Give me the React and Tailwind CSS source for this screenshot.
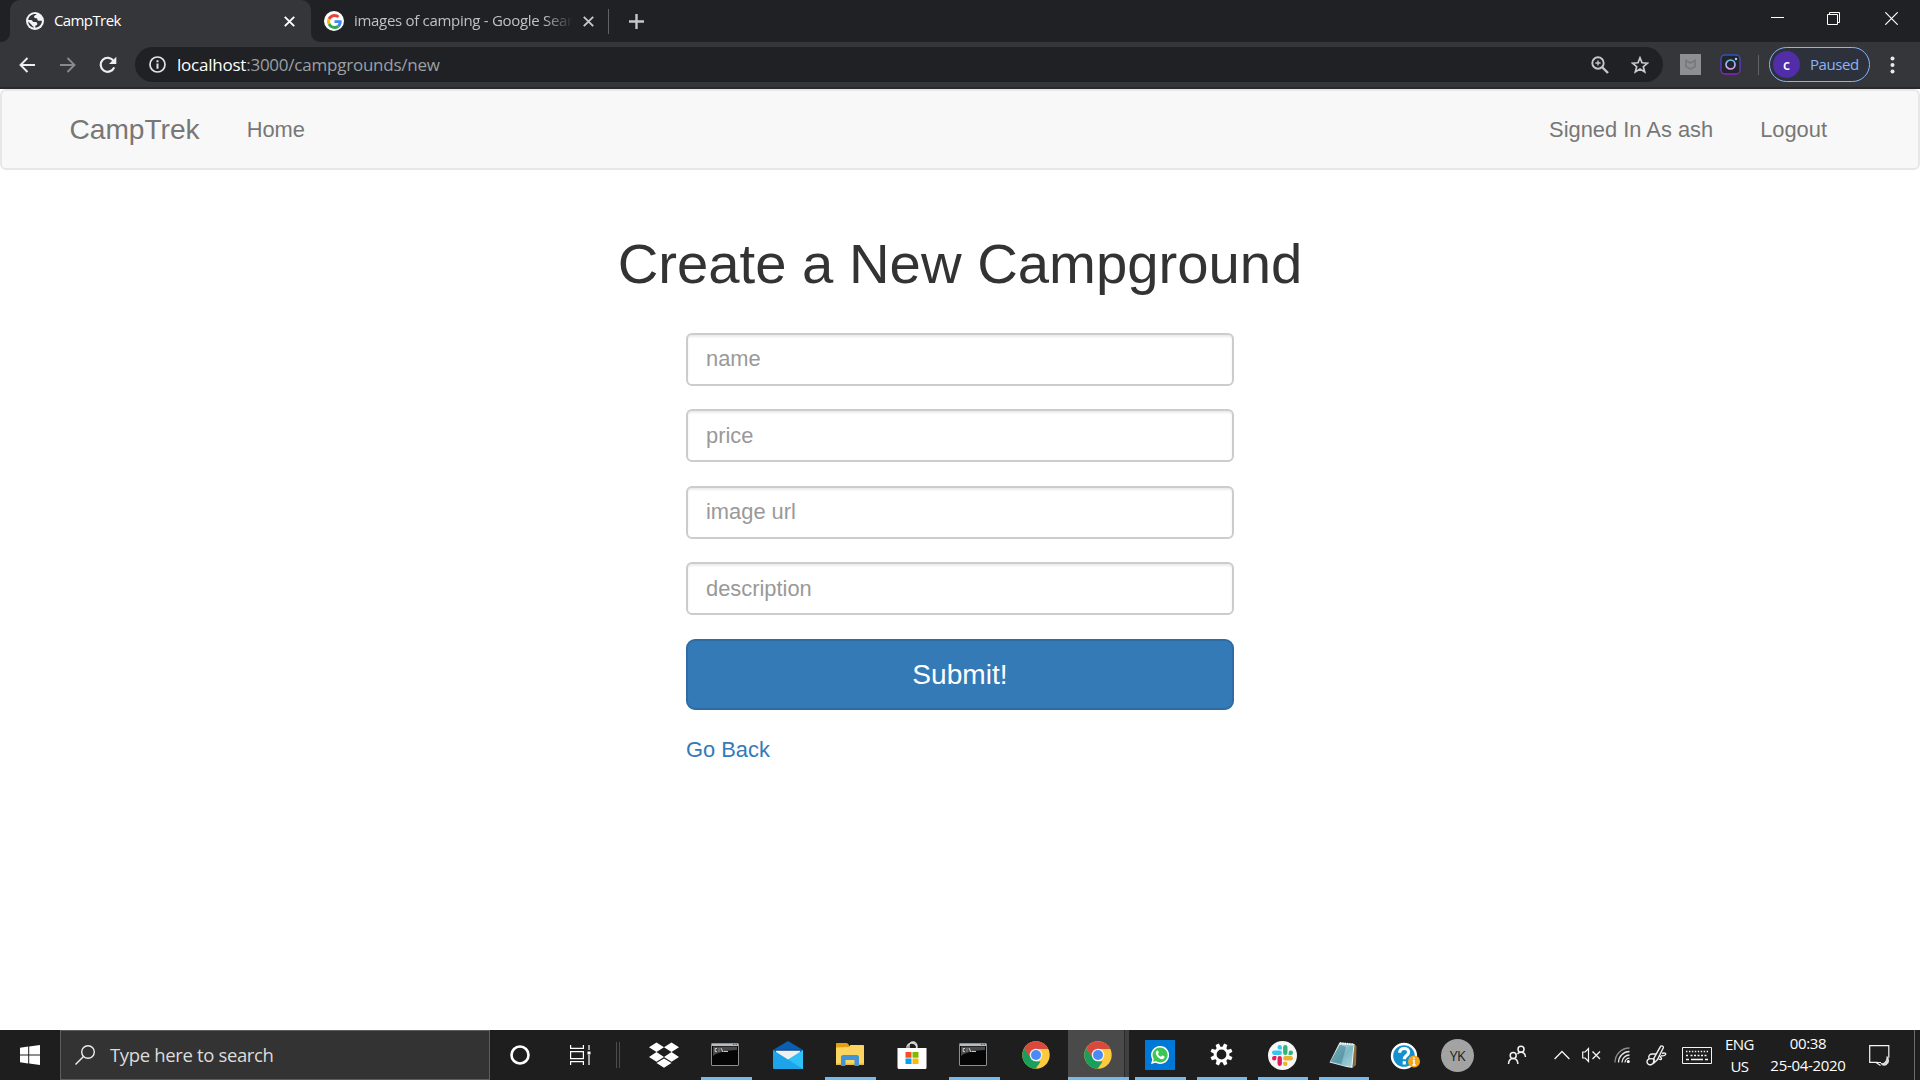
import React from "react";

function Glyph({ className = "", box = "0 0 24 24", children }) {
  return (
    <svg className={`shrink-0 ${className}`} viewBox={box} fill="none">
      {children}
    </svg>
  );
}

/* ---------- browser icons ---------- */

const Globe = () => (
  <Glyph className="size-[18px]" box="0 0 18 18">
    <circle cx="9" cy="9" r="9" fill="#f1f3f4" />
    <path fill="#35363a" d="M10.700 2.200C9.900 3.100 8.200 3.100 8 4.600c-.1 1.200.7 1.600 1.900 1.600.9 0 1.500.5 1.500 1.300 0 .9.600 1.300 1.600 1.300h2.900c0 3.700-2.900 6.900-6.600 6.900v-2.200c1.500 0 2-.8 2-1.800 0-1.300-.9-1.800-2.200-1.800H7c-.3-1.500-1.300-2-2.500-2H2.200C2.600 4.300 6.600 1.300 10.700 2.200Z" />
    <path fill="#35363a" d="M2.200 9.600 6 13.200c.3 1 1 1.200 1.600 1.400v1.100C4.500 15.200 2.300 12.700 2.200 9.600Z" />
  </Glyph>
);

const GoogleG = () => (
  <span className="flex size-5 shrink-0 items-center justify-center rounded-full bg-white">
    <Glyph className="size-[15px]" box="0 0 48 48">
      <path fill="#ea4335" d="M24 9.500c3.540 0 6.710 1.220 9.210 3.600l6.850-6.850C35.900 2.380 30.470 0 24 0 14.620 0 6.510 5.380 2.560 13.220l7.980 6.190C12.430 13.720 17.740 9.500 24 9.500z" />
      <path fill="#4285f4" d="M46.980 24.550c0-1.570-.15-3.090-.38-4.550H24v9.020h12.940c-.58 2.960-2.260 5.480-4.780 7.180l7.730 6c4.510-4.180 7.090-10.360 7.090-17.650z" />
      <path fill="#fbbc05" d="M10.530 28.590c-.48-1.450-.76-2.990-.76-4.590s.27-3.140.76-4.590l-7.980-6.190C.92 16.460 0 20.120 0 24c0 3.880.92 7.540 2.560 10.780l7.970-6.190z" />
      <path fill="#34a853" d="M24 48c6.480 0 11.930-2.130 15.890-5.810l-7.730-6c-2.150 1.450-4.920 2.300-8.160 2.300-6.260 0-11.570-4.220-13.470-9.910l-7.980 6.190C6.510 42.620 14.620 48 24 48z" />
    </Glyph>
  </span>
);

const CloseX = ({ className }) => (
  <Glyph className={`size-[11px] ${className}`} box="0 0 11 11">
    <path d="m.8.8 9.400 9.400M10.200.8.8 10.200" stroke="currentColor" strokeWidth="1.900" />
  </Glyph>
);

/* ---------- taskbar icons ---------- */

const Dropbox = () => (
  <Glyph className="size-[30px]" box="0 0 30 30">
    <path fill="#fff" d="m7.500 2.500 7.500 4.800-7.500 4.800L0 7.300ZM22.500 2.500 30 7.300l-7.500 4.800L15 7.300ZM7.500 12.100l7.500 4.800-7.500 4.800L0 16.900ZM22.500 12.100l7.500 4.800-7.500 4.800-7.500-4.800ZM15 18.400l7.500 4.700-7.500 4.700-7.500-4.700Z" />
  </Glyph>
);

const Terminal = () => (
  <Glyph className="mr-0.5 mb-px h-[23px] w-7" box="0 0 28 23">
    <rect x=".5" y=".5" width="27" height="22" rx=".5" fill="#050505" stroke="#8b8f92" />
    <path d="M1 1h26v2H1z" fill="#b6bdc2" />
    <path d="M2 3.500h24v3.500C16 7.500 7 9 2 13Z" fill="#4a4a4a" />
    <path d="M6 5.500H4.200V8.500H6M8 5.500v1M8 7.500v1M10 5l1.800 4M12.500 8.500H17" stroke="#dcdcdc" strokeWidth=".9" />
    <path d="M22 1.500h1.500M24.500 1.500H26" stroke="#5a6066" strokeWidth="1" />
  </Glyph>
);

const Mail = () => (
  <Glyph className="size-[30px]" box="0 0 30 30">
    <path fill="#0b5fb0" d="M0 10 15 1l15 9v4H0Z" />
    <path fill="#f1f1f1" d="M3 10h24v8l-12 4-12-4Z" />
    <path fill="#0a4a94" d="M1 9.600h28l-2 1.200H3Z" />
    <path fill="#2fc0f5" d="M30 10v19H0L15 19.500Z" />
    <path fill="#1ea4ea" d="M0 10v17.500c0 .8.500 1.500 1.500 1.500H30Z" />
  </Glyph>
);

const Explorer = () => (
  <Glyph className="mb-0.5 h-[23px] w-7" box="0 0 28 23">
    <path fill="#e3a010" d="M0 1c0-.6.400-1 1-1h10l2 2v3H0Z" />
    <path fill="#fcd462" d="M0 4.500 12.500 4l2-2H27c.6 0 1 .4 1 1v18.500H0Z" />
    <path fill="#e9b93e" d="M0 20.500h28V22H0Z" />
    <path fill="#3f95d8" d="M5 23V14c0-1 .9-2 2-2h14c1.100 0 2 1 2 2v9h-4.500v-6h-9v6Z" />
  </Glyph>
);

const Store = () => (
  <Glyph className="size-[30px]" box="0 0 30 30">
    <path d="M10 9V6.500a5 5 0 0 1 9.500 0V9M12 9V6a4 4 0 0 1 8 0v3" stroke="#d9d9d9" strokeWidth="1.300" />
    <path fill="#fff" d="M.5 8h29v19.500c0 1-.6 1.500-1.500 1.500H2c-1 0-1.500-.6-1.500-1.500Z" />
    <path fill="#f25022" d="M8.500 12h6v5.700h-6z" />
    <path fill="#7fba00" d="M15.500 12h6v5.700h-6z" />
    <path fill="#00a4ef" d="M8.500 18.500h6V24h-6z" />
    <path fill="#ffb900" d="M15.500 18.500h6V24h-6z" />
  </Glyph>
);

const Chrome = () => (
  <Glyph className="size-7" box="0 0 48 48">
    <circle cx="24" cy="24" r="23.500" fill="#fdca3f" />
    <path fill="#d9493d" d="M3.600 12.300A23.500 23.500 0 0 1 44.400 12.300L44.500 13.500H24L14 29.700Z" />
    <path fill="#1a9e5c" d="M3.600 12.300 14.900 29.300 24 34.500l8 .5-8.800 12.500A23.500 23.500 0 0 1 3.600 12.300Z" />
    <circle cx="24" cy="24" r="10.800" fill="#f1f1f1" />
    <circle cx="24" cy="24" r="8.600" fill="#4a8af4" />
  </Glyph>
);

const WhatsApp = () => (
  <span className="flex size-[30px] items-center justify-center bg-[#0078d7]">
    <Glyph className="size-[18px]" box="0 0 24 24">
      <path fill="#fff" d="M12 0a12 12 0 0 0-10.300 18L0 24l6.200-1.600A12 12 0 1 0 12 0Z" />
      <path fill="#3ec655" d="M12 2.100a9.900 9.900 0 0 0-8.300 15.300L2.900 21l3.700-.9A9.900 9.900 0 1 0 12 2.100Z" />
      <path fill="#fff" d="M8.200 6c.5-.2 1-.1 1.200.4l.9 2c.1.400 0 .7-.2 1l-.9 1.100c1 1.800 2.300 3 4.200 3.900l1.200-1.400c.3-.3.600-.3.900-.2l2.200 1c.4.200.5.500.4 1-.3 1.800-1.700 2.700-3.300 2.700C10.500 17.300 6.400 12.600 6.400 9c0-1.200.8-2.500 1.800-3Z" />
    </Glyph>
  </span>
);

const Gear = () => (
  <Glyph className="mb-0.5 size-[23px]" box="0 0 24 24">
    <circle cx="12" cy="12" r="6.600" stroke="#fff" strokeWidth="3" />
    {[22.5, 67.5, 112.5, 157.5, 202.5, 247.5, 292.5, 337.5].map((a) => (
      <path key={a} d="M10.200.4h3.600L14.300 5H9.700Z" fill="#fff" transform={`rotate(${a} 12 12)`} />
    ))}
  </Glyph>
);

const Slack = () => (
  <span className="flex size-[29px] items-center justify-center rounded-full bg-[#f7f7f7]">
    <Glyph className="size-[21px]" box="0 0 24 24">
      <path fill="#36c5f0" d="M8.800 0a2.500 2.500 0 1 0 0 5h2.500V2.500A2.500 2.500 0 0 0 8.800 0Zm0 6.300H2.500a2.500 2.500 0 1 0 0 5h6.300a2.500 2.500 0 1 0 0-5Z" />
      <path fill="#2eb67d" d="M24 8.800a2.500 2.500 0 1 0-5 0v2.500h2.500A2.500 2.500 0 0 0 24 8.800Zm-6.300 0V2.500a2.500 2.500 0 1 0-5 0v6.300a2.500 2.500 0 1 0 5 0Z" />
      <path fill="#ecb22e" d="M15.200 24a2.500 2.500 0 1 0 0-5h-2.500v2.500a2.500 2.500 0 0 0 2.500 2.500Zm0-6.300h6.300a2.500 2.500 0 1 0 0-5h-6.300a2.500 2.500 0 1 0 0 5Z" />
      <path fill="#e01e5a" d="M0 15.200a2.500 2.500 0 1 0 5 0v-2.500H2.500A2.500 2.500 0 0 0 0 15.200Zm6.300 0v6.300a2.500 2.500 0 1 0 5 0v-6.300a2.500 2.500 0 1 0-5 0Z" />
    </Glyph>
  </span>
);

const Notepad = () => (
  <Glyph className="mr-0.5 mb-px size-7" box="0 0 28 28">
    <defs>
      <linearGradient id="pad" x1="0" y1="0" x2="1" y2="1">
        <stop offset="0" stopColor="#d3edf2" />
        <stop offset=".55" stopColor="#7db7c4" />
        <stop offset="1" stopColor="#a8d6df" />
      </linearGradient>
    </defs>
    <path fill="#8d6b3a" d="m25 3 2.500 2-.5 19-3 2.500Z" />
    <path fill="#e9eef0" d="m10.500 1.500 15 1.500-2 24-6-1L.5 21.500Z" />
    <path fill="url(#pad)" d="m11 2.500 13.500 1.300-2.200 22-8.300-1.300L1 20.800Z" />
    <path fill="#4f8e9d" d="m11 3.500-9.500 17 11 2.500L17 6Z" opacity=".7" />
    <path d="m11 2.300 14 1.200" stroke="#f5f5f5" strokeWidth="2.200" strokeDasharray="1.300 1" />
  </Glyph>
);

const Help = () => (
  <Glyph className="h-[30px] w-[30px]" box="0 0 30 30">
    <circle cx="14" cy="16" r="12" fill="#1390cd" stroke="#fff" strokeWidth="2.400" />
    <path d="M9.700 12.800c.1-2.800 2-4.300 4.500-4.300 2.600 0 4.400 1.500 4.400 3.700 0 3.300-4.300 3.300-4.300 7M14.300 21.300v3.200" stroke="#fff" strokeWidth="3.200" />
    <circle cx="24" cy="21.500" r="6" fill="#f9a51a" />
    <path d="M24 17.300v1.800M22.700 20.500H24V25M22.300 25h3.400" stroke="#fff" strokeWidth="1.500" />
  </Glyph>
);

const APPS = [
  { id: "dropbox", icon: <Dropbox />, cell: "w-[62px]" },
  { id: "cmd-1", icon: <Terminal />, cell: "w-[62px]", open: true },
  { id: "mail", icon: <Mail />, cell: "w-[62px]" },
  { id: "files", icon: <Explorer />, cell: "w-[62px]", open: true },
  { id: "store", icon: <Store />, cell: "w-[62px]" },
  { id: "cmd-2", icon: <Terminal />, cell: "w-[62px]", open: true },
  { id: "chrome-1", icon: <Chrome />, cell: "w-[62px]" },
  { id: "chrome-2", icon: <Chrome />, cell: "w-[62px]", open: true, active: true },
  { id: "whatsapp", icon: <WhatsApp />, cell: "w-[62px]", open: true },
  { id: "settings", icon: <Gear />, cell: "w-[61px]", open: true },
  { id: "slack", icon: <Slack />, cell: "w-[61px]", open: true },
  { id: "notepad", icon: <Notepad />, cell: "w-[61px]", open: true },
  { id: "help", icon: <Help />, cell: "w-[61px]" },
];

function AppButton({ app }) {
  return (
    <div className={`relative flex h-[50px] shrink-0 items-center justify-center ${app.cell}`}>
      {app.active && (
        <div className="absolute inset-y-0 left-px right-0 flex justify-end bg-[#4a4a4a]">
          <div className="w-[5px] border-l border-[#2a2a2a] bg-[#404040]" />
        </div>
      )}
      <div className="relative">{app.icon}</div>
      {app.open && (
        <div className={`absolute bottom-0 h-[3px] bg-[#76b9ed] ${app.active ? "left-[1px] right-0" : "left-[6px] right-[5px]"}`} />
      )}
    </div>
  );
}

/* ---------- browser chrome ---------- */

function TabStrip() {
  return (
    <div className="flex h-[42px] bg-[#202124] text-[15px]">
      <div className="flex w-[10px] items-end bg-[#35363a]">
        <div className="h-full w-full rounded-br-[9px] bg-[#202124]" />
      </div>
      <div className="flex w-[301px] items-center rounded-t-[10px] bg-[#35363a] pl-4 pr-[16px]">
        <Globe />
        <span className="ml-[10px] flex-1 pb-[2px] tracking-[-0.6px] text-white">CampTrek</span>
        <CloseX className="text-white" />
      </div>
      <div className="flex w-[297px] bg-[#35363a]">
        <div className="flex h-full w-full items-center rounded-bl-[9px] bg-[#202124] pl-[13px]">
          <GoogleG />
          <span className="ml-[10px] w-[220px] overflow-hidden whitespace-nowrap pb-[2px] tracking-[-0.3px] text-[#bdc1c6] [mask-image:linear-gradient(to_right,#000_190px,transparent_219px)]">
            images of camping - Google Sear
          </span>
          <CloseX className="ml-[9px] text-[#c4c7cb]" />
        </div>
      </div>
      <div className="mt-[9px] h-[25px] w-px bg-[#5f6368]" />
      <Glyph className="ml-5 mt-[13.500px] size-[15px]" box="0 0 15 15">
        <path d="M7.500 0v15M0 7.500h15" stroke="#c4c7cb" strokeWidth="2.400" />
      </Glyph>
      <div className="flex-1" />
      <div className="flex items-start pr-[22px]">
        <div className="mt-[17px] h-px w-[13px] bg-white" />
        <Glyph className="ml-[43px] mt-3 size-[13px]" box="0 0 13 13">
          <path d="M.5 2.500h10v10H.5zM2.500 2.500v-2h10v10h-2" stroke="#fff" strokeWidth="1" />
        </Glyph>
        <Glyph className="ml-[45px] mt-3 size-[13px]" box="0 0 13 13">
          <path d="m.3.3 12.400 12.400M12.700.3.3 12.700" stroke="#fff" strokeWidth="1.200" />
        </Glyph>
      </div>
    </div>
  );
}

function Toolbar() {
  return (
    <div className="flex h-[45px] items-center bg-[#35363a] pl-[19px]">
      <Glyph className="size-4" box="0 0 16 16">
        <path d="M16 8H1.500M8.500 1 1.500 8l7 7" stroke="#eceef0" strokeWidth="1.900" />
      </Glyph>
      <Glyph className="ml-[25px] size-4" box="0 0 16 16">
        <path d="M0 8h14.500M7.500 1l7 7-7 7" stroke="#87898c" strokeWidth="1.900" />
      </Glyph>
      <Glyph className="ml-[23px] size-[18px]" box="0 0 18 18">
        <path d="M15.200 11.300A7 7 0 1 1 14.600 5" stroke="#eceef0" strokeWidth="2.200" />
        <path d="M17.300.7V8H10Z" fill="#eceef0" />
      </Glyph>
      <div className="ml-[18px] flex h-[35px] w-[1528px] items-center rounded-full bg-[#202124] pl-[14px] pr-[14px]">
        <Glyph className="size-[17px]" box="0 0 17 17">
          <circle cx="8.500" cy="8.500" r="7.500" stroke="#e2e4e7" strokeWidth="1.700" />
          <path d="M8.500 4.200v2M8.500 7.500v5.300" stroke="#e2e4e7" strokeWidth="2" />
        </Glyph>
        <div className="ml-[11px] flex-1 text-[17px] tracking-[-0.23px] text-[#9aa0a6]">
          <span className="text-white">localhost</span>:3000/campgrounds/new
        </div>
        <Glyph className="size-[18px]" box="0 0 18 18">
          <circle cx="7" cy="7" r="5.700" stroke="#c4c6c9" strokeWidth="1.900" />
          <path d="m11 11 6 6" stroke="#c4c6c9" strokeWidth="2.400" />
          <path d="M7 4.400v5.200M4.400 7h5.200" stroke="#c4c6c9" strokeWidth="1.400" />
        </Glyph>
        <Glyph className="ml-[22px] size-[18px]" box="0 0 18 18">
          <path d="m9 1.800 2 5 5.500.4-4.200 3.500 1.400 5.300L9 13.100 4.300 16l1.400-5.300-4.200-3.500L7 6.800Z" stroke="#c9cbce" strokeWidth="1.700" />
        </Glyph>
      </div>
      <div className="ml-[17px] flex size-[21px] items-center justify-center border-[1.500px] border-[#8a8f93] bg-[#8d8f91]">
        <Glyph className="size-[11px]" box="0 0 11 11">
          <path d="M1 1.500 5.500 4 10 1.500v6L5.500 10 1 7.500Z" stroke="#767a7d" strokeWidth="1.800" />
        </Glyph>
      </div>
      <Glyph className="ml-[19px] size-[21px]" box="0 0 21 21">
        <defs>
          <linearGradient id="ig" x1="0" y1="0" x2="0" y2="1">
            <stop offset="0" stopColor="#2a55c0" />
            <stop offset="1" stopColor="#8c1fc0" />
          </linearGradient>
          <linearGradient id="lens" x1="0" y1="0" x2="0" y2="1">
            <stop offset="0" stopColor="#6cc4ee" />
            <stop offset="1" stopColor="#d9a5ee" />
          </linearGradient>
        </defs>
        <rect x="1" y="1" width="19" height="19" rx="4" fill="#22232c" stroke="url(#ig)" strokeWidth="1.400" />
        <circle cx="10.500" cy="10.500" r="4.500" stroke="url(#lens)" strokeWidth="1.700" />
        <circle cx="16" cy="5" r="1.200" fill="#bcd0f4" />
      </Glyph>
      <div className="ml-[17px] h-5 w-px bg-[#5f6368]" />
      <div className="ml-[10px] flex h-[35px] w-[101px] items-center rounded-full border-[1.500px] border-[#8ab4f8] bg-[#2d313b] pl-[3px]">
        <span className="flex size-[27px] items-center justify-center rounded-full bg-[#512da8] pb-px text-[14px] font-semibold text-white">c</span>
        <span className="ml-[10px] text-[15px] tracking-[-0.45px] text-[#8ab4f8]">Paused</span>
      </div>
      <Glyph className="ml-5 h-[18px] w-[5px]" box="0 0 5 18">
        <circle cx="2.500" cy="2.500" r="2" fill="#e8eaed" />
        <circle cx="2.500" cy="9" r="2" fill="#e8eaed" />
        <circle cx="2.500" cy="15.500" r="2" fill="#e8eaed" />
      </Glyph>
    </div>
  );
}

/* ---------- page ---------- */

const FIELDS = ["name", "price", "image url", "description"];

function Page() {
  return (
    <main className="flex-1 bg-white font-['Liberation_Sans',Arial,sans-serif] text-[21.875px] leading-[31px]">
      <nav className="flex h-[81px] items-center rounded-[6px] border-2 border-[#e7e7e7] bg-[#f8f8f8] pb-px pl-[67.500px] pr-[91px] text-[#777]">
        <a className="text-[28.125px]">CampTrek</a>
        <a className="ml-[47px]">Home</a>
        <a className="ml-auto">Signed In As ash</a>
        <a className="ml-[47px]">Logout</a>
      </nav>
      <h1 className="mt-[63px] text-center text-[56.25px] leading-[62px] text-[#333]">Create a New Campground</h1>
      <form className="mx-auto mt-[37.700px] flex w-[548px] flex-col">
        {FIELDS.map((f) => (
          <input
            key={f}
            placeholder={f}
            className="mb-[23.600px] h-[53px] w-full rounded-[6px] border-2 border-[#ccc] px-[18px] shadow-[inset_0_2px_2px_rgba(0,0,0,0.075)] placeholder:text-[#999]"
          />
        ))}
        <button type="button" className="h-[71px] rounded-[9px] border-2 border-[#2e6da4] bg-[#337ab7] text-[28.125px] text-white">
          Submit!
        </button>
        <a className="mt-6 text-[#337ab7]">Go Back</a>
      </form>
    </main>
  );
}

/* ---------- taskbar ---------- */

function Tray() {
  return (
    <div className="flex h-full flex-1 items-center text-[15px] text-white">
      <div className="flex w-[45px] justify-center">
        <span className="flex size-[33px] items-center justify-center rounded-full bg-[#a3a3a3] text-[14px] tracking-[-0.5px] text-[#222]">YK</span>
      </div>
      <div className="ml-5 flex w-[34px] justify-center">
        <Glyph className="size-5" box="0 0 20 20">
          <g stroke="#f4f4f4" strokeWidth="1.500">
            <circle cx="6.200" cy="10.500" r="3" />
            <path d="M1.500 19c.2-3.500 2-5.500 4.700-5.500s4.500 2 4.700 5.500" />
            <circle cx="14" cy="4.200" r="3" />
            <path d="M10.500 9c.8-1.200 2-1.800 3.500-1.800 2.600 0 4.200 1.700 4.500 4.800" />
          </g>
        </Glyph>
      </div>
      <div className="ml-[13px] flex w-[30px] justify-center">
        <Glyph className="h-[10px] w-4" box="0 0 16 10">
          <path d="m.6 9 7.400-7.500L15.400 9" stroke="#f4f4f4" strokeWidth="1.300" />
        </Glyph>
      </div>
      <div className="flex w-[30px] justify-center pr-0.5">
        <Glyph className="h-4 w-[19px]" box="0 0 19 16">
          <path d="M.7 5v6h2.500L6.500 14.500v-13L3.200 5Z" stroke="#f4f4f4" strokeWidth="1.200" />
          <path d="m10.500 4.500 7.500 7.500M18 4.500 10.500 12" stroke="#f4f4f4" strokeWidth="1.300" />
        </Glyph>
      </div>
      <div className="flex w-[31px] justify-center">
        <Glyph className="h-[17px] w-[17px]" box="0 0 17 17">
          <g strokeWidth="1.300">
            <path d="M1 15.500A14.500 14.500 0 0 1 15.500 1" stroke="#8d8d8d" />
            <path d="M4.500 15.500a11 11 0 0 1 11-11M8 15.500A7.500 7.500 0 0 1 15.500 8M11 15.500a4.500 4.500 0 0 1 4.500-4.300" stroke="#e6e6e6" />
          </g>
          <circle cx="14.300" cy="14.500" r="1.500" fill="#fff" />
        </Glyph>
      </div>
      <div className="flex w-[37px] justify-center">
        <Glyph className="size-[21px]" box="0 0 21 21">
          <g stroke="#f0f0f0" strokeWidth="1.400">
            <path d="M14.600 1.300c1-1 3.200 0 2.700 1.400L11.500 14.500 8 18l-.2-4.500Z" />
            <path d="M8 14.500c-2.500-1.800-7-.5-7 2.200 0 2.500 2.700 3.500 4.500 2.800 2.300-.9 2.600-3.500 2.500-6M3 13.500C2 10.500 4 9 6.500 9H10M12.500 13.500c1 1.700 3.300 1.200 3 0-.3-1-1.500-1.500-1.500-2.800M16 8.500c2-1 4.300-.5 3.600 1-.6 1.300-2.500 1.500-4.600 1.200" />
          </g>
        </Glyph>
      </div>
      <div className="flex w-11 justify-center">
        <Glyph className="h-[17px] w-[30px]" box="0 0 30 17">
          <path d="M.5.5h29v16H.5z" stroke="#f4f4f4" />
          <path d="M4 4.500h22" stroke="#f4f4f4" strokeWidth="1.400" strokeDasharray="1.400 1.550" />
          <path d="M4 8.500h2.500m2 0h14m0 0H26" stroke="#f4f4f4" strokeWidth="1.400" strokeDasharray="2 1.500" />
          <path d="M4 12.500h3m2 0h12m2 0h3" stroke="#f4f4f4" strokeWidth="1.300" />
        </Glyph>
      </div>
      <div className="flex w-[41px] flex-col items-center pb-px leading-[22px] tracking-[-0.5px]">
        <span>ENG</span>
        <span>US</span>
      </div>
      <div className="flex w-24 flex-col items-center pb-[2px] leading-[22.500px] tracking-[-0.3px]">
        <span>00:38</span>
        <span>25-04-2020</span>
      </div>
      <div className="flex w-[46px] justify-center">
        <Glyph className="h-[21px] w-[21px]" box="0 0 21 21">
          <path d="M12 17.500H8v-0.200H.7V.7h19.100v12M7 17.500l4.500 3" stroke="#f4f4f4" strokeWidth="1.200" />
          <path d="M18 11.500c3 3.500 1.500 8.500-2.500 8.800-1.500.1-3-.6-3.500-1.800 3.500.5 6-2.500 6-7Z" fill="#d8d8d8" stroke="#fff" strokeWidth=".7" />
        </Glyph>
      </div>
      <div className="ml-auto mr-[5px] h-full w-px bg-[#6b6b6b]" />
    </div>
  );
}

function Taskbar() {
  return (
    <div className="flex h-[50px] items-center bg-[#1e1e1e]">
      <div className="flex w-[60px] justify-center">
        <Glyph className="size-5" box="0 0 20 20">
          <path fill="#fff" d="M0 2.700 8.200 1.600v8H0ZM9.200 1.400 20 0v9.500H9.200ZM0 10.500h8.200v8L0 17.300ZM9.200 10.500H20V20L9.200 18.600Z" />
        </Glyph>
      </div>
      <div className="flex h-[50px] w-[430px] items-center border border-[#5e5e5e] bg-[#333] pl-[14px] text-[18.500px] text-[#dcdcdc]">
        <Glyph className="size-5" box="0 0 20 20">
          <circle cx="13" cy="7" r="6.300" stroke="#eee" strokeWidth="1.400" />
          <path d="M8.500 11.500.5 19.500" stroke="#eee" strokeWidth="1.400" />
        </Glyph>
        <span className="ml-[15px] tracking-[-0.35px]">Type here to search</span>
      </div>
      <div className="flex w-[60px] justify-center">
        <Glyph className="size-5" box="0 0 20 20">
          <circle cx="10" cy="10" r="8.500" stroke="#fff" strokeWidth="2.600" />
        </Glyph>
      </div>
      <div className="flex w-[60px] justify-center">
        <Glyph className="h-5 w-[21px]" box="0 0 21 20">
          <g stroke="#fff" strokeWidth="1.200">
            <path d="M.6 0v3.400h12.800V0M.6 6.600h12.800v7H.6zM.6 20v-3.400h12.800V20M19 0v5M19 10v10" />
          </g>
          <path d="M17.500 6.500h3v3h-3z" fill="#fff" />
        </Glyph>
      </div>
      <div className="ml-[6px] h-[26px] w-1 border-x border-[#4c4c4c]" />
      <div className="ml-[13px] flex">
        {APPS.map((app) => (
          <AppButton key={app.id} app={app} />
        ))}
      </div>
      <Tray />
    </div>
  );
}

export default function App() {
  return (
    <div className="flex h-[1080px] w-[1920px] flex-col overflow-hidden bg-white font-['Open_Sans','Noto_Sans',sans-serif]">
      <TabStrip />
      <Toolbar />
      <div className="h-[2px] bg-[#28292c]" />
      <Page />
      <Taskbar />
    </div>
  );
}
